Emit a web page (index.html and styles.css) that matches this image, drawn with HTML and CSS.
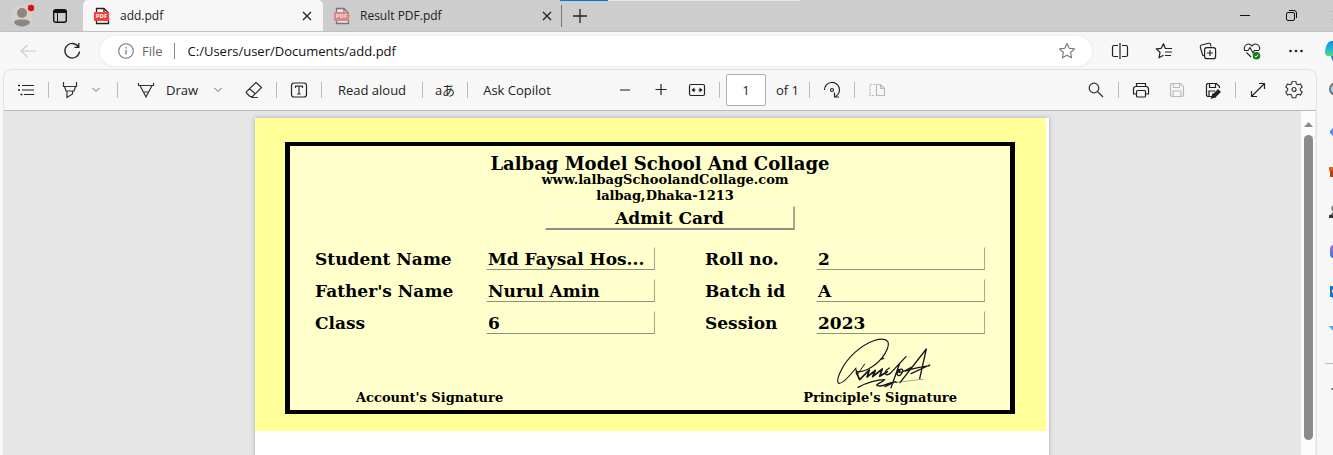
FILE: index.html
```
<!DOCTYPE html>
<html lang="en">
<head>
<meta charset="utf-8">
<title>add.pdf</title>
<link rel="stylesheet" href="styles.css">
</head>
<body>
<svg class="defs" aria-hidden="true">
  <symbol id="pdf" viewBox="0 0 18 18">
    <path d="M3.5 16.5V1.5H11L15.500 6V16.500Z" fill="#fff" stroke="#222" stroke-width="1.3"/>
    <path d="M11 1.500V6H15.500" fill="none" stroke="#222" stroke-width="1.300"/>
    <rect x="1" y="5" width="15" height="9" rx="1" fill="#f83b3b"/>
  </symbol>
  <symbol id="close" viewBox="0 0 10 10"><path d="M1 1L9 9M9 1L1 9" stroke="#222" stroke-width="1.300"/></symbol>
  <symbol id="chevron" viewBox="0 0 10 10"><path d="M1.500 3L5 6.500L8.500 3" fill="none" stroke="#666"/></symbol>
</svg>
<div class="browser">
  <header class="tabs">
    <div class="progress"></div>
    <button class="avatar" aria-label="Profile">
      <svg width="24" height="24" viewBox="0 0 24 24"><circle cx="11" cy="12" r="10.500" fill="#d6d1cc"/><circle cx="11" cy="9" r="5" fill="#8b8782"/><path d="M3 19C3 16 6 15.500 11 15.500S19 16 19 19C17 21 14 22.500 11 22.500S5 21 3 19Z" fill="#8b8782"/><circle cx="20" cy="4" r="3.200" fill="#e01010" /></svg>
    </button>
    <button class="workspace" aria-label="Tab actions">
      <svg width="14" height="14" viewBox="0 0 14 14"><rect x=".7" y=".7" width="12.600" height="12.600" rx="2" fill="none" stroke="#111" stroke-width="1.400"/><path d="M1 1H13V4H1Z" fill="#111"/><path d="M4.500 4V13" stroke="#111"/></svg>
    </button>
    <div class="tab active">
      <span class="pdf"><svg width="18" height="18"><use href="#pdf"/></svg><b>PDF</b></span>
      <span class="name">add.pdf</span>
      <button aria-label="Close add.pdf"><svg width="10" height="10"><use href="#close"/></svg></button>
    </div>
    <div class="tab">
      <span class="pdf dim"><svg width="18" height="18"><use href="#pdf"/></svg><b>PDF</b></span>
      <span class="name">Result PDF.pdf</span>
      <button aria-label="Close Result PDF.pdf"><svg width="10" height="10"><use href="#close"/></svg></button>
    </div>
    <button class="newtab" aria-label="New tab"><svg width="14" height="14" viewBox="0 0 14 14"><path d="M7 0V14M0 7H14" stroke="#222" stroke-width="1.300"/></svg></button>
    <div class="window">
      <button aria-label="Minimize"><svg width="11" height="11" viewBox="0 0 11 11"><path d="M0 5.500H10" stroke="#111"/></svg></button>
      <button aria-label="Restore"><svg width="11" height="11" viewBox="0 0 11 11"><rect x=".5" y="2.500" width="8" height="8" rx="1.500" fill="none" stroke="#111"/><path d="M3 .5H8Q10.500 .5 10.500 3V8" fill="none" stroke="#111"/></svg></button>
      <button aria-label="Close"><svg width="11" height="11"><use href="#close"/></svg></button>
    </div>
  </header>

  <div class="nav">
    <button class="back" aria-label="Back"><svg width="16" height="14" viewBox="0 0 16 14"><path d="M16 7H1M7.500 1L1 7L7.500 13" fill="none" stroke="#ccc" stroke-width="1.200"/></svg></button>
    <button class="reload" aria-label="Refresh"><svg width="18" height="18" viewBox="0 0 18 18"><path d="M15.500 5A7.300 7.300 0 1 0 16.500 9.500M15.800 1V5.300H11.500" fill="none" stroke="#222" stroke-width="1.300"/></svg></button>
    <div class="address">
      <svg width="16" height="16" viewBox="0 0 16 16"><circle cx="8" cy="8" r="7.300" fill="none" stroke="#777" stroke-width="1.100"/><path d="M8 7V11.500M8 4V5.400" stroke="#777" stroke-width="1.300"/></svg>
      <span class="scheme">File</span>
      <input type="text" aria-label="Address" value="C:/Users/user/Documents/add.pdf">
      <button aria-label="Add to favorites"><svg width="18" height="18" viewBox="0 0 18 18"><path d="M9 1.500L11.200 6.200L16.500 6.900L12.600 10.500L13.600 15.800L9 13.200L4.400 15.800L5.400 10.500L1.500 6.900L6.800 6.200Z" fill="none" stroke="#777" stroke-width="1.100" stroke-linejoin="round"/></svg></button>
    </div>
    <div class="actions">
      <button aria-label="Split screen"><svg width="18" height="18" viewBox="0 0 18 18"><path d="M7 3.500H3Q1.500 3.500 1.500 5V13Q1.500 14.500 3 14.500H7M11 3.500H15Q16.500 3.500 16.500 5V13Q16.500 14.500 15 14.500H11M9 1V17" fill="none" stroke="#222" stroke-width="1.200"/></svg></button>
      <button aria-label="Favorites"><svg width="18" height="18" viewBox="0 0 18 18"><path d="M13 6.500H10.300L8.500 1.700L6.200 6.300L1.300 6.900L5 10.300L4 15.800L8.500 13.200M11 6.500H17M10 10H17M10 13.500H16" fill="none" stroke="#222" stroke-width="1.200" stroke-linejoin="round"/></svg></button>
      <button aria-label="Collections"><svg width="18" height="18" viewBox="0 0 18 18"><path d="M5.500 14L3.600 13L1.300 5Q1 3.500 2.500 3L9.500 1.300Q11 1 11.500 2.300L12 4.500" fill="none" stroke="#222" stroke-width="1.100"/><rect x="5.600" y="5.600" width="11" height="11" rx="2.200" fill="none" stroke="#222" stroke-width="1.200"/><path d="M11 8V14M8 11H14" stroke="#222" stroke-width="1.200"/></svg></button>
      <button aria-label="Browser essentials"><svg width="18" height="18" viewBox="0 0 18 18"><path d="M1.600 8C0 3 6 0 9 4C12 0 18 3 16.400 8M3.500 10.500L8 15M1 8.500H5L7 5.500L10 11L11.500 8.500H16" fill="none" stroke="#222" stroke-width="1.100"/><circle cx="13.500" cy="13.700" r="3.800" fill="#127c17"/><path d="M11.800 14L13 15.200L15.200 12.500" fill="none" stroke="#fff"/></svg></button>
      <button aria-label="Settings and more"><svg width="18" height="18" viewBox="0 0 18 18" fill="#222"><circle cx="3.500" cy="9" r="1.300"/><circle cx="9" cy="9" r="1.300"/><circle cx="14.500" cy="9" r="1.300"/></svg></button>
    </div>
    <button class="copilot" aria-label="Copilot"><svg width="22" height="24" viewBox="0 0 22 24"><defs><linearGradient id="cp" x2="0" y2="1"><stop stop-color="#1688e8"/><stop offset=".5" stop-color="#19b9d0"/><stop offset="1" stop-color="#65cf82"/></linearGradient></defs><path d="M6 2H16V17H3Q0 17 0 13Q1 3 6 2Z" fill="url(#cp)"/><path d="M6 17H16V23H9Q7 22 6 17Z" fill="#1976ec"/></svg></button>
  </div>

  <div class="body">
    <section class="viewer">
      <div class="toolbar">
        <button aria-label="Contents"><svg width="18" height="18" viewBox="0 0 18 18"><path d="M5 4.500H17M5 9H17M7 13.500H17" stroke="#222" stroke-width="1.200"/><path d="M1 4.500H3M1 9H3M3.500 13.500H5.500" stroke="#222" stroke-width="1.600"/></svg></button>
        <i></i>
        <button class="highlight" aria-label="Highlight"><svg width="18" height="18" viewBox="0 0 18 18"><path d="M2.500 1V5.500H15.500V1M3.500 5.500L5 10H13L14.500 5.500M6 10V16.500L11.500 13V10" fill="none" stroke="#333" stroke-width="1.200"/></svg></button>
        <button class="more" aria-label="Highlight options"><svg width="10" height="10"><use href="#chevron"/></svg></button>
        <i class="wide"></i>
        <button class="draw"><svg width="18" height="18" viewBox="0 0 18 18"><path d="M1.500 2V4.500H16.500V2M3 4.500L9 16L15 4.500M6.500 11H11.500" fill="none" stroke="#333" stroke-width="1.200"/></svg><span>Draw</span></button>
        <button class="more" aria-label="Draw options"><svg width="10" height="10"><use href="#chevron"/></svg></button>
        <button class="erase" aria-label="Erase"><svg width="18" height="18" viewBox="0 0 18 18"><path d="M11 1.500L16.500 6.500L7.500 15.500H5L1.500 12Q1 11 1.700 10.500ZM4.500 7.800L10.500 13M6 16.500H13" fill="none" stroke="#333" stroke-width="1.200" stroke-linejoin="round"/></svg></button>
        <i></i>
        <button aria-label="Add text"><svg width="18" height="18" viewBox="0 0 18 18"><rect x="1.500" y="2" width="15" height="14" rx="2.500" fill="none" stroke="#222" stroke-width="1.200"/><path d="M5.500 7V5.200H12.500V7M9 5.200V13M7.200 13H10.800" fill="none" stroke="#333" stroke-width="1.200"/></svg></button>
        <i></i>
        <button class="read">Read aloud</button>
        <i></i>
        <button class="translate" aria-label="Translate">aあ</button>
        <i></i>
        <button class="ask">Ask Copilot</button>
        <button aria-label="Zoom out"><svg width="18" height="18" viewBox="0 0 18 18"><path d="M4 9H14" stroke="#888" stroke-width="2"/></svg></button>
        <button aria-label="Zoom in"><svg width="18" height="18" viewBox="0 0 18 18"><path d="M3.500 8.500H14.500M9 3V14" stroke="#222" stroke-width="1.200"/></svg></button>
        <button aria-label="Fit to width"><svg width="18" height="18" viewBox="0 0 18 18"><rect x="1.500" y="3.500" width="15" height="11" rx="1.500" fill="none" stroke="#222" stroke-width="1.200"/><path d="M4 9H7.500M14 9H10.500" stroke="#222"/><path d="M6.500 6.500L3.500 9L6.500 11.500ZM11.500 6.500L14.500 9L11.500 11.500Z" fill="#222"/></svg></button>
        <i></i>
        <input class="pageno" type="text" aria-label="Page number" value="1">
        <span class="of">of 1</span>
        <i></i>
        <button aria-label="Rotate"><svg width="18" height="18" viewBox="0 0 18 18"><path d="M1.500 9A7.500 7.500 0 1 1 12.500 15.500M11.500 11.500V16H16" fill="none" stroke="#222" stroke-width="1.200"/><circle cx="9" cy="9" r="1.500" fill="none" stroke="#222" stroke-width="1.200"/></svg></button>
        <i></i>
        <button aria-label="Page view" disabled><svg width="18" height="18" viewBox="0 0 18 18"><path d="M7 3.500H2V14.500H7" fill="none" stroke="#bbb" stroke-width="1.200" stroke-dasharray="2 1"/><path d="M8.500 3.500H12.500L16.500 7.500V14.500H8.500ZM12.500 3.500V7.500H16.500" fill="none" stroke="#bbb" stroke-width="1.200"/></svg></button>
        <div class="tools">
          <button aria-label="Find"><svg width="18" height="18" viewBox="0 0 18 18"><circle cx="7" cy="7" r="4.800" fill="none" stroke="#333" stroke-width="1.200"/><path d="M10.500 10.500L16 16" stroke="#333" stroke-width="1.300"/></svg></button>
          <i></i>
          <button aria-label="Print"><svg width="18" height="18" viewBox="0 0 18 18" fill="none" stroke="#222" stroke-width="1.200"><path d="M4.500 5V2.500H13.500V5M4.500 13H1.500V8Q1.500 5.500 4 5.500H14Q16.500 5.500 16.500 8V13H13.500"/><rect x="4.500" y="9.500" width="9" height="6.500" rx="1"/></svg></button>
          <button aria-label="Save" disabled><svg width="18" height="18" viewBox="0 0 18 18" fill="none" stroke="#bbb" stroke-width="1.200"><path d="M3.500 2.500H12.500L15.500 5.500V14.500L14.500 15.500H3.500L2.500 14.500V3.500ZM5.500 2.500V6.500H11.500V2.500M5 15.500V10H13V15.500"/></svg></button>
          <button aria-label="Save as"><svg width="18" height="18" viewBox="0 0 18 18" fill="none" stroke="#222" stroke-width="1.200"><path d="M8 15.500H3.500L2.500 14.500V3.500L3.500 2.500H12.500L15.500 5.500V7M5.500 2.500V6.500H11.500V2.500M5 15.500V10H11"/><path d="M9.500 15.500L15.500 9.500" stroke-width="4"/><path d="M7.500 17L9 13L11 16Z" fill="#222"/></svg></button>
          <i></i>
          <button aria-label="Full screen"><svg width="18" height="18" viewBox="0 0 18 18"><path d="M10 2.500H15.500V8M8 15.500H2.500V10M15.500 2.500L2.500 15.500" fill="none" stroke="#222" stroke-width="1.200"/></svg></button>
          <button aria-label="Settings"><svg width="18" height="18" viewBox="0 1 18 18"><path d="M7.200 1.200H10.800L11.300 3.700L13 4.700L15.400 3.900L17.200 7L15.300 8.600V10.400L17.200 12L15.400 15.100L13 14.300L11.300 15.300L10.800 17.800H7.200L6.700 15.300L5 14.300L2.600 15.100L.8 12L2.700 10.400V8.600L.8 7L2.600 3.900L5 4.700L6.700 3.700Z" fill="none" stroke="#333" stroke-width="1.100" stroke-linejoin="round"/><circle cx="9" cy="9.500" r="2" fill="none" stroke="#333" stroke-width="1.200"/></svg></button>
        </div>
      </div>

      <div class="stage">
        <div class="canvas">
          <main class="page">
            <div class="sheet">
              <article class="card">
                <header class="heading">
                  <h1>Lalbag Model School And Collage</h1>
                  <p>www.lalbagSchoolandCollage.com</p>
                  <p>lalbag,Dhaka-1213</p>
                  <h2>Admit Card</h2>
                </header>
                <dl>
                  <dt>Student Name</dt><dd>Md Faysal Hos...</dd><dt>Roll no.</dt><dd>2</dd>
                  <dt>Father's Name</dt><dd>Nurul Amin</dd><dt>Batch id</dt><dd>A</dd>
                  <dt>Class</dt><dd>6</dd><dt>Session</dt><dd>2023</dd>
                </dl>
                <div class="signs">
                  <div class="sign">Account's Signature</div>
                  <div class="sign">
                    <svg width="98" height="52" viewBox="45 20 294 156" fill="none" stroke="#15151c" stroke-linecap="round" stroke-linejoin="round">
                      <path stroke-width="3.500" d="M108 110C92 130 66 158 56 156C46 148 66 98 104 64C144 28 188 14 203 30C212 48 186 88 154 108C134 120 116 124 108 118"/>
                      <path stroke-width="3" d="M134 98L112 130M107 112L119 145L146 116"/>
                      <path stroke-width="5" d="M109 124L119 145L148 116L141 137L166 117L158 136L187 113L179 135L202 121"/>
                      <path stroke-width="4" d="M182 84L191 81M208 110C188 122 195 140 213 124L258 76M239 96L213 169M237 114C223 131 238 142 247 123C252 108 236 112 237 124C250 121 264 115 274 108"/>
                      <path stroke-width="4" d="M240 154L319 53L299 142M256 119C281 110 306 107 329 103M273 127L329 101"/>
                      <path stroke-width="4" d="M114 168C143 153 175 145 194 145C188 153 164 160 172 163C195 170 205 148 230 153M226 151L195 166"/>
                      <path stroke-width="1.500" stroke="#555" d="M225 153C258 151 283 146 309 144"/>
                    </svg>
                    <span>Principle's Signature</span>
                  </div>
                </div>
              </article>
            </div>
          </main>
        </div>
        <div class="scroll"><svg width="9" height="5" viewBox="0 0 9 5"><path d="M0 5L4.500 0L9 5Z" fill="#8b8b8b"/></svg><div class="thumb"></div></div>
      </div>
    </section>

    <aside class="side">
      <svg width="24" height="24" viewBox="0 0 24 24"><circle cx="10" cy="9" r="6" fill="#a8d4f4" stroke="#777" stroke-width="2"/></svg>
      <svg width="24" height="24" viewBox="0 0 24 24"><path d="M4 11L12 3V21L4 13Z" fill="#5584ff"/></svg>
      <svg width="24" height="24" viewBox="0 0 24 24"><path d="M3 7H20V11H3Z" fill="#e65c16"/><path d="M4 11H20V17H4Z" fill="#bd3e0d"/></svg>
      <svg width="24" height="24" viewBox="0 0 24 24"><path d="M8 4L5 8L7 12L3 16V18H20V4Z" fill="#777"/><path d="M3 15H20V18H3Z" fill="#333"/></svg>
      <svg width="24" height="24" viewBox="0 0 24 24"><defs><linearGradient id="m" x2="0" y2="1"><stop stop-color="#a474d9"/><stop offset="1" stop-color="#2678e6"/></linearGradient></defs><rect x="4" y="5" width="16" height="13" rx="4" fill="url(#m)"/></svg>
      <svg width="24" height="24" viewBox="0 0 24 24"><path d="M4 6H20V20H8L6 17H4Z" fill="#0a78d4"/><circle cx="8" cy="11" r="2" fill="#fff"/></svg>
      <svg width="24" height="24" viewBox="0 0 24 24"><path d="M3 6H20V10H6Z" fill="#3bb8ea"/><path d="M6 10H20V14Z" fill="#f5b83c"/></svg>
      <hr>
      <svg width="24" height="24" viewBox="0 0 24 24"><path d="M5 9H19M12 2V16" stroke="#222"/></svg>
    </aside>
  </div>
</div>
</body>
</html>
```

FILE: styles.css
```
* { box-sizing: border-box; }
body { margin: 0; font: 13px/18px "Open Sans", "Noto Sans", sans-serif; color: #222; }
button, input { font: inherit; color: inherit; border: 0; background: none; padding: 0; margin: 0; }
button { display: flex; align-items: center; justify-content: center; flex: none; white-space: nowrap; }
svg { display: block; flex: none; }
.defs { position: absolute; width: 0; height: 0; }
.browser { height: 100vh; display: flex; flex-direction: column; overflow: hidden; background: #f7f7f7; }

.tabs { position: relative; flex: none; display: flex; height: 32px; background: #cdcdcd; border-bottom: 1px solid #c0c0c0; overflow: hidden; }
.progress { position: absolute; left: 42%; top: 0; width: 18%; height: 1px; background: linear-gradient(90deg, #0878d4 20%, #e6e6e6 20%); }
.avatar { width: 46px; }
.workspace { width: 28px; margin-right: 9px; }
.tab { display: flex; align-items: center; width: 240px; height: 32px; padding: 0 10px; font-size: 12px; flex: none; }
.tab.active { background: #f7f7f7; border-radius: 5px 5px 0 0; }
.tab .name { flex: 1; padding-left: 9px; }
.tab button { width: 12px; height: 20px; }
.pdf { position: relative; width: 18px; height: 18px; }
.pdf b { position: absolute; left: 0; top: 5px; width: 17px; font: bold 6px/9px "Open Sans", sans-serif; color: #fff; text-align: center; }
.dim { opacity: .5; }
.newtab { width: 36px; height: 22px; align-self: center; margin-left: -2px; border-left: 1px solid #777; }
.window { display: flex; margin-left: auto; margin-right: -27px; }
.window button { width: 46px; }

.nav { flex: none; display: flex; align-items: center; height: 37px; overflow: hidden; }
.back { width: 44px; margin-left: 6px; }
.reload { width: 44px; margin-right: 6px; }
.address { flex: 1; display: flex; align-items: center; height: 30px; padding: 0 16px 0 18px; background: #fff; border-radius: 15px; box-shadow: 0 0 3px #e4e4e4; font-size: 13px; }
.scheme { margin-left: 8px; padding-right: 11px; line-height: 16px; color: #666; border-right: 1px solid #888; }
.address input { flex: 1; min-width: 0; margin-left: 13px; color: #111; }
.actions { display: flex; padding: 0 7px 0 6px; }
.actions button { width: 44px; height: 30px; }
.copilot { margin-right: -14px; }

.body { flex: 1; min-height: 0; display: flex; }
.viewer { flex: 1; min-width: 0; margin-left: 3px; display: flex; flex-direction: column; border: 1px solid #e2e2e2; border-bottom: 0; border-radius: 9px 9px 0 0; overflow: hidden; }
.toolbar { flex: none; display: flex; align-items: center; height: 41px; padding: 0 4px; border-bottom: 1px solid #bbb; }
.toolbar button { width: 36px; height: 32px; }
.toolbar i { flex: none; width: 1px; height: 16px; margin: 0 4px; background: #bbb; }
.toolbar i.wide { margin: 0 12px; }
.toolbar .highlight { width: 34px; }
.toolbar .more { width: 18px; }
.toolbar .draw { width: 79px; justify-content: flex-start; padding-left: 7px; gap: 11px; }
.toolbar .erase { margin-left: 9px; }
.toolbar .read { width: 92px; }
.toolbar .ask { width: 90px; margin-right: 45px; }
.toolbar .translate { font: 13px/18px "Open Sans", "Noto Sans CJK JP", sans-serif; }
.pageno { width: 40px; height: 32px; margin-left: 2px; text-align: center; background: #fff; border: 1px solid #b0b0b0; border-radius: 2px; }
.of { width: 28px; margin: 0 1px 0 10px; }
.tools { display: flex; align-items: center; margin-left: auto; }

.stage { flex: 1; min-height: 0; display: flex; }
.canvas { flex: 1; min-width: 0; background: #e6e6e6; padding: 7px 1px 0 0; overflow: hidden; }
.scroll { width: 15px; flex: none; display: flex; flex-direction: column; align-items: center; gap: 8px; padding: 11px 0 15px; background: #fcfcfc; border-right: 1px solid #eee; }
.thumb { flex: 1; width: 9px; border-radius: 5px; background: #8b8b8b; }

.page { width: 794px; min-height: 1123px; margin: 0 auto; padding-right: 3px; background: #fff; box-shadow: 0 0 5px #aaa; }
.sheet { padding: 24px 31px 17px 30px; background: #ff9; }
.card { padding: 9px 25px 4px; border: solid #000; border-width: 4px 5px; background: #ffc; color: #000; font: bold 17px/24px "DejaVu Serif", serif; }
.heading { display: flex; flex-direction: column; align-items: center; padding-left: 30px; }
.heading h1 { margin: 0; padding-right: 10px; font-size: 18px; line-height: 17px; }
.heading p { margin: 0; font-size: 13px; line-height: 16px; }
.heading h2 { width: 250px; height: 24px; margin: 2px 0 17px 10px; font-size: 17px; line-height: 23px; text-align: center; }
.heading h2, .card dd { border: 1px solid; border-color: #ffffe8 #a8a88c #8e8e84 #ffffe8; }
.heading h2 { border-right-width: 2px; border-bottom-width: 2px; }
.card dl { display: grid; grid-template-columns: 171px 219px 111px 169px; grid-auto-rows: 23px; row-gap: 9px; margin: 0; }
.card dt { white-space: nowrap; }
.card dd { width: 169px; margin: 0; padding-left: 1px; line-height: 22px; white-space: nowrap; overflow: hidden; }
.signs { display: flex; justify-content: space-between; align-items: flex-end; padding: 4px 28px 0 41px; font-size: 13px; line-height: 16px; }
.sign { display: flex; flex-direction: column; align-items: center; }
.sign svg { margin-left: 8px; }

.side { flex: none; width: 16px; display: flex; flex-direction: column; gap: 16px; padding: 11px 0 0 9px; overflow: hidden; }
.side hr { width: 24px; margin: 3px 0 0 -1px; border: 0; border-top: 1px solid #bbb; }
```
